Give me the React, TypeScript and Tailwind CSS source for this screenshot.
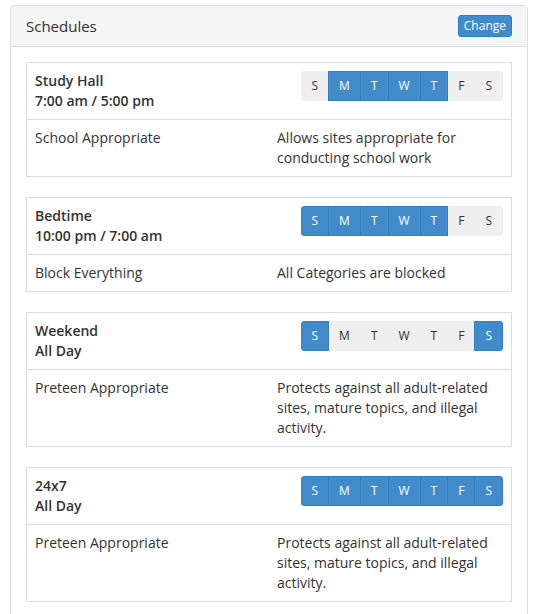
import React from "react";

type Schedule = {
  name: string;
  time: string;
  days: boolean[];
  category: string;
  description: string;
};

const DAY_LETTERS = ["S", "M", "T", "W", "T", "F", "S"];

const schedules: Schedule[] = [
  {
    name: "Study Hall",
    time: "7:00 am / 5:00 pm",
    days: [false, true, true, true, true, false, false],
    category: "School Appropriate",
    description: "Allows sites appropriate for conducting school work",
  },
  {
    name: "Bedtime",
    time: "10:00 pm / 7:00 am",
    days: [true, true, true, true, true, false, false],
    category: "Block Everything",
    description: "All Categories are blocked",
  },
  {
    name: "Weekend",
    time: "All Day",
    days: [true, false, false, false, false, false, true],
    category: "Preteen Appropriate",
    description: "Protects against all adult-related sites, mature topics, and illegal activity.",
  },
  {
    name: "24x7",
    time: "All Day",
    days: [true, true, true, true, true, true, true],
    category: "Preteen Appropriate",
    description: "Protects against all adult-related sites, mature topics, and illegal activity.",
  },
];

const DayGroup = ({ days }: { days: boolean[] }) => {
  return (
    <div className="flex">
      {DAY_LETTERS.map((d, i) => (
        <span
          key={i}
          className={`relative px-[10px] py-[5px] text-xs leading-[18px] border first:rounded-l-[3px] last:rounded-r-[3px] ${
            i > 0 ? "-ml-px" : ""
          } ${
            days[i]
              ? "bg-[#428bca] border-[#357ebd] text-white z-10"
              : "bg-[#efefef] border-[#efefef] text-[#333]"
          }`}
        >
          {d}
        </span>
      ))}
    </div>
  );
};

const ScheduleCard = ({ item }: { item: Schedule }) => {
  return (
    <div className="border border-[#ddd] mb-5">
      <div className="grid grid-cols-2 border-b border-[#ddd]">
        <div className="p-2 font-semibold">
          <div>{item.name}</div>
          <div>{item.time}</div>
        </div>
        <div className="p-2 flex justify-end items-start">
          <DayGroup days={item.days} />
        </div>
      </div>
      <div className="grid grid-cols-2">
        <div className="p-2">{item.category}</div>
        <div className="p-2">{item.description}</div>
      </div>
    </div>
  );
};

export default function App() {
  return (
    <div className="bg-white min-h-screen pt-[5px] pl-[10px] pr-[11px] text-sm leading-5 text-[#333] font-['Open_Sans',sans-serif]">
      <div className="border border-[#ddd] rounded-t-[4px]">
        <div className="bg-[#f5f5f5] border-b border-[#ddd] px-[15px] py-[9px] flex items-center justify-between rounded-t-[4px]">
          <span className="text-[15px]">Schedules</span>
          <button className="bg-[#428bca] border border-[#357ebd] text-white text-xs leading-[18px] px-[5px] py-px rounded-[3px]">
            Change
          </button>
        </div>
        <div className="p-[15px]">
          {schedules.map((s) => (
            <ScheduleCard key={s.name} item={s} />
          ))}
        </div>
      </div>
    </div>
  );
}
